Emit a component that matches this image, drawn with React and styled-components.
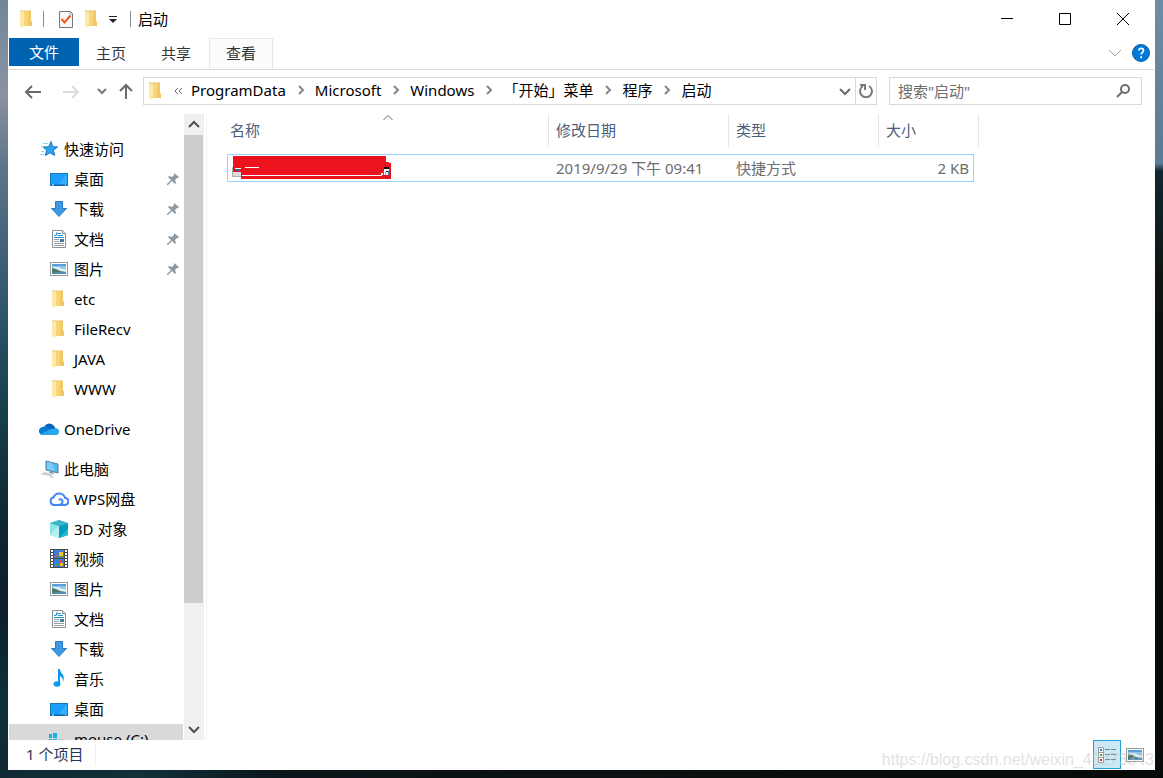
import { useState } from 'react';
import styled, { createGlobalStyle } from 'styled-components';

const GlobalStyle = createGlobalStyle`
  * {
    box-sizing: border-box;
  }
  body {
    margin: 0;
    font-family: "Noto Sans", "Noto Sans CJK SC", sans-serif;
    font-size: 15px;
    line-height: 20px;
    color: #000;
  }
  button, input {
    font: inherit;
    color: inherit;
  }
  svg {
    display: block;
    flex: none;
  }
`
const Desktop = styled.div`
  position: relative;
  height: 100vh;
  padding: 0 8px 8px;
  background:
    linear-gradient(90deg, #0f2a35, #12303a 12%, #0a1418 25%, #0b0f10 60%, #070b08) bottom / 100% 8px no-repeat,
    linear-gradient(#6f8799, #8a92a3 12%, #5b7388 22%, #33586f 38%, #17404d 52%, #0e2834 66%, #0c2029 78%, #0c3238 90%, #12262f) left / 8px 100% no-repeat,
    linear-gradient(#6d8ea8, #5b7d98 18%, #5b7d98 21%, #13252e 22%, #101e25 28%, #0d1510 36%, #060b0a 60%, #080b09) right / 8px 100% no-repeat;
`
const Window = styled.main`
  height: 100%;
  display: flex;
  flex-direction: column;
  padding: 0 1px;
  background: #fff;
`
const TitleBar = styled.header`
  display: flex;
  align-items: center;
  height: 38px;
  padding: 0 2px 0 8px;
`
const IconButton = styled.button`
  display: flex;
  align-items: center;
  justify-content: center;
  flex: none;
  width: ${(p) => p.$width || 20}px;
  height: ${(p) => p.$height || 28}px;
  padding: 0;
  border: 0;
  background: transparent;
`
const QuickTools = styled.div`
  display: flex;
  align-items: center;
  gap: 6px;
  padding: 0 6px 0 12px;
`
const Divider = styled.span`
  width: 1px;
  height: 16px;
  margin-left: 6px;
  background: #8c8c8c;
`
const Title = styled.h1`
  flex: 1;
  margin: 0 0 0 7px;
  font-size: 15px;
  font-weight: 400;
`
const Ribbon = styled.nav`
  display: flex;
  height: 32px;
  border-bottom: 1px solid #dadbdc;
`
const FileTab = styled.button`
  width: 70px;
  height: 28px;
  padding: 0;
  border: 0;
  background: #0063b1;
  color: #fff;
`
const Tab = styled.button`
  width: 64px;
  margin-right: 1px;
  padding: 0 0 2px;
  border: 1px solid ${(p) => (p.$active ? '#e8e9ec' : 'transparent')};
  border-bottom: 0;
  background: ${(p) => (p.$active ? '#fbfcfe' : 'transparent')};
  color: #333;
`
const RibbonEnd = styled.div`
  display: flex;
  align-items: center;
  gap: 6px;
  margin-left: auto;
  padding: 0 3px 2px 0;
`
const NavBar = styled.div`
  display: flex;
  align-items: center;
  height: 44px;
  padding: 0 12px 2px 6px;
`
const AddressBar = styled.div`
  flex: 1;
  min-width: 0;
  display: flex;
  align-items: center;
  height: 28px;
  margin: 0 12px 0 4px;
  padding-left: 2px;
  border: 1px solid #d9d9d9;
`
const Crumbs = styled.ol`
  flex: 1;
  min-width: 0;
  overflow: hidden;
  display: flex;
  margin: 0;
  padding: 0 0 2px;
  list-style: none;
  white-space: nowrap;
`
const Crumb = styled.li`
  display: flex;
  align-items: center;
  a {
    color: #000;
    text-decoration: none;
  }
  svg {
    margin: 0 9px 0 10px;
  }
`
const Refresh = styled(IconButton)`
  height: 26px;
  border-left: 1px solid #d9d9d9;
`
const Search = styled.form`
  flex: 0 1 253px;
  min-width: 0;
  display: flex;
  align-items: center;
  height: 28px;
  padding: 0 6px 0 8px;
  border: 1px solid #d9d9d9;
  input {
    flex: 1;
    min-width: 0;
    padding: 0;
    border: 0;
    outline: 0;
    background: transparent;
  }
  input::placeholder {
    color: #6d6d6d;
    opacity: 1;
  }
`
const Body = styled.div`
  flex: 1;
  min-height: 0;
  display: flex;
`
const Sidebar = styled.aside`
  flex: 0 0 198px;
  display: flex;
  border-right: 1px solid #f3f3f3;
`
const Tree = styled.div`
  flex: 1;
  overflow: hidden;
  padding-top: 20px;
`
const Group = styled.ul`
  margin: 0 0 10px;
  padding: 0;
  list-style: none;
`
const TreeItem = styled.a`
  display: flex;
  align-items: center;
  gap: 5px;
  height: 30px;
  padding: 0 3px 0 ${(p) => (p.$root ? 30 : 40)}px;
  background: ${(p) => (p.$selected ? '#d9d9d9' : 'transparent')};
  color: #000;
  text-decoration: none;
  white-space: nowrap;
  span {
    flex: 1;
  }
`
const ScrollBar = styled.div`
  width: 20px;
  margin: 0 2px 0 1px;
  display: flex;
  flex-direction: column;
  background: #f0f0f0;
`
const ScrollTrack = styled.div`
  flex: 1;
  padding-right: 1px;
`
const ScrollThumb = styled.div`
  height: 80%;
  background: #cdcdcd;
`
const Files = styled.section`
  flex: 1;
  min-width: 0;
  padding-left: 20px;
`
const Table = styled.table`
  display: block;
  max-width: 752px;
  border-collapse: collapse;
  thead, tbody {
    display: block;
  }
`
const HeadRow = styled.tr`
  display: grid;
  grid-template-columns: minmax(0, 322px) 180px 150px 100px;
  height: 33px;
`
const HeadCell = styled.th`
  position: relative;
  padding: 6px 0 0 ${(p) => (p.$first ? 3 : 7)}px;
  border-right: 1px solid #e5e5e5;
  color: #4c607a;
  font-weight: 400;
  text-align: left;
`
const SortMark = styled.svg`
  position: absolute;
  top: 0;
  left: 50%;
  transform: translateX(-50%);
`
const FileRow = styled.tr`
  display: grid;
  grid-template-columns: minmax(0, 321px) 180px 150px 1fr;
  height: 28px;
  margin: 7px 5px 0 0;
  border: 1px solid #99d1ff;
`
const Cell = styled.td`
  padding: ${(p) => (p.$name ? '0 0 0 4px' : '3px 4px 0 7px')};
  color: #6d6d6d;
  text-align: ${(p) => p.$align || 'left'};
  white-space: nowrap;
`
const StatusBar = styled.footer`
  display: flex;
  align-items: center;
  height: 30px;
  padding: 0 6px 0 17px;
  color: #1e395b;
`
const Count = styled.span`
  flex: none;
  padding: 0 12px 2px 0;
  border-right: 1px solid #f0f0f0;
`
const Views = styled.div`
  display: flex;
  height: 30px;
  margin-left: auto;
`
const ViewButton = styled(IconButton)`
  height: 29px;
  border: 1px solid ${(p) => (p.$on ? '#26a0da' : 'transparent')};
  background: ${(p) => (p.$on ? '#cbe8f6' : 'transparent')};
`
const Watermark = styled.div`
  position: absolute;
  right: 9px;
  bottom: 8px;
  color: rgba(195, 195, 195, .5);
  font-family: "Liberation Sans", Arial, sans-serif;
  font-size: 16px;
  pointer-events: none;
`

function Icon({ size = 20, children }) {
  return <svg width={size} height={size} viewBox={`0 0 ${size} ${size}`} aria-hidden="true">{children}</svg>
}

function Chevron({ d, size = 10, color = '#666', width = 2 }) {
  return <Icon size={size}><path d={d} fill="none" stroke={color} strokeWidth={width} /></Icon>
}

function FolderIcon() {
  return <Icon>
    <path d="M6 2h8v10h1v5H6z" fill="#f6d57c" />
    <path d="M11 2h3v10h1v5h-4z" fill="#f0c965" />
    <path d="M3 2h4v13l-1 4-3-2z" fill="#ffe9a6" />
    <path d="M3 2h11" stroke="#e9c468" />
  </Icon>
}

function DesktopIcon() {
  return <Icon>
    <rect x="1.5" y="4.5" width="17" height="12" fill="#1a9fff" stroke="#1577b8" />
    <path d="M9 16L18 5v11z" fill="#36adff" />
    <path d="M2 16h16" stroke="#0a5c94" />
    <path d="M3 16h2M16 16h1" stroke="#fff" />
  </Icon>
}

function DownloadIcon() {
  return <Icon>
    <path d="M6.5 2.5h7v7h4L10 17.5 2.5 9.5h4z" fill="#3d97e4" stroke="#2b7cc7" />
  </Icon>
}

function DocumentIcon() {
  return <Icon>
    <path d="M3.5 1.5h10l3 3v14h-13z" fill="#fff" stroke="#8d9194" />
    <path d="M13.5 1.5v3h3" fill="#ddd" stroke="#8d9194" />
    <path d="M5 6.5h2l1-3v3M9 4.5h3M9 6.5h5M5 8.5h10" fill="none" stroke="#2692c8" />
    <path d="M5 10.5h5M5 12.5h5M5 14.5h10M5 16.5h10" stroke="#9aa0a5" />
    <path d="M11 10h4v3h-4z" fill="#48799e" />
  </Icon>
}

function PictureIcon() {
  return <Icon>
    <rect x="1.5" y="3.5" width="17" height="13" fill="#fff" stroke="#9b9b9b" />
    <path d="M3 5h14v10H3z" fill="#8fc4ed" />
    <path d="M3 5h14v2H3z" fill="#5a9ee0" />
    <path d="M5 8h5l3 2h4v3H3V9z" fill="#dceef6" />
    <path d="M3 9l4 1 4 2 6 1v1H3z" fill="#4f7a66" />
    <path d="M3 14l8-1h6v2H3z" fill="#4f8fb4" />
  </Icon>
}

function StarIcon() {
  return <Icon>
    <path d="M12 2.5l1.6 5.2 5 .2-4.2 3.3 1.3 5.3-4.6-2.7-4.7 2.7 1.3-5.3-3.5-3.1 5.6-.4z" fill="#2aa4f4" stroke="#1478c0" />
    <path d="M4 4.5h5M2 7.5h3M2 12.5h3M1 15.5h4" stroke="#8fd0f5" />
  </Icon>
}

function CloudIcon() {
  return <Icon>
    <path d="M5 9a5.500 5.500 0 0 1 10-2c1 1 1.500 2 1.500 3L11 13z" fill="#0862b9" />
    <path d="M0 12.500A4 4 0 0 1 4 8c2-1 4 0 6 1l5 4-9 3H4a4 4 0 0 1-4-3.500z" fill="#087bd5" />
    <path d="M2 15l8-4c1-1 3-1.500 5-1a3 3 0 0 1 5 2.500c0 2-1 3.500-3 3.500H4c-1 0-2-.5-2-1z" fill="#29a6ee" />
  </Icon>
}

function ComputerIcon() {
  return <Icon>
    <path d="M7 2l12 3v9L7 11z" fill="#53b9f3" stroke="#5f7f94" />
    <path d="M8 3l5 1 3 8-8-2z" fill="#79cdfa" />
    <path d="M11 12l3 1 1 2-5-1z" fill="#8c9aa4" />
    <path d="M1 15l5-2 9 3-4 1zM10 18l3-1 2 1-3 1z" fill="#c8cdd1" />
  </Icon>
}

function WpsIcon() {
  return <Icon>
    <path d="M12 16h3.500a3.600 3.600 0 0 0 .5-7.200A6 6 0 0 0 4.600 8.300 4 4 0 0 0 4.500 16H9c3 0 4.500-1.500 4.500-3.500S12 10 10.500 10.500" fill="none" stroke="#4285f4" strokeWidth="2" strokeLinecap="round" />
  </Icon>
}

function CubeIcon() {
  return <Icon>
    <path d="M1 4l9-3 9 3v12l-9 3-9-3z" fill="#8be4e8" />
    <path d="M1 4l9-3 9 3-9 3z" fill="#36b4c6" />
    <path d="M10 7l9-3v12l-9 3z" fill="#069bc3" />
    <path d="M10 19V7L2 14v2z" fill="#b5f2ef" />
    <path d="M10 19l9-9v6z" fill="#24bcd2" />
  </Icon>
}

function VideoIcon() {
  return <Icon>
    <path d="M1 0h18v19H1z" fill="#4a4a4a" />
    <path d="M5 1h10v8H5zM5 10h10v8H5z" fill="#3e7cd6" />
    <path d="M3 1v18M17 1v18" stroke="#fff" strokeWidth="2" strokeDasharray="2 1" />
    <path d="M10 3h4v4h-4zM11 14h3v3h-3z" fill="#f4c71f" />
    <path d="M6 6h3v2H6zM11 11h2v3h-2z" fill="#e04a44" />
    <path d="M9 7h5v1H9zM6 15h3v2H6z" fill="#51a33c" />
  </Icon>
}

function MusicIcon() {
  return <Icon>
    <path d="M9 0h2c0 5 6 5 3 13 0-3-1-5-3-6v8H9z" fill="#0a99ed" />
    <ellipse cx="8" cy="15" rx="3.500" ry="2.800" fill="#0a99ed" />
  </Icon>
}

function DriveIcon() {
  return <Icon>
    <path d="M2 15l6-5h7l4 5v3H2z" fill="#c4c7c9" />
    <path d="M0 5h3v4H0zM4 4h4v5H4zM0 10h3v4H0zM4 10h4v5H4z" fill="#10b3ea" />
  </Icon>
}

function PinIcon() {
  return <Icon size={14}>
    <path d="M8 1l5 4-1 1h-1L9 8l1 3-1 1-3-3-4 4H1v-1l4-4-3-3 1-1 3 1 2-2V2z" fill="#8e9aa3" />
  </Icon>
}

function CheckDocIcon() {
  return <Icon>
    <path d="M3.5 2.5h11l2 2v14h-13z" fill="#f5f7fa" stroke="#777" />
    <path d="M14 3v2h2" fill="none" stroke="#aaa" />
    <path d="M5.500 10l3 3.500 6-7" fill="none" stroke="#ef5a10" strokeWidth="2" />
  </Icon>
}

function DetailsIcon() {
  return <Icon>
    <path d="M1.5 2.5h5v15h-5zM2 7.5h4M2 12.5h4" fill="#fff" stroke="#9b9b9b" />
    <path d="M3 4h2v2H3z" fill="#3185c5" />
    <path d="M3 9h2v2H3z" fill="#6d8b35" />
    <path d="M3 14h2v2H3z" fill="#d23a24" />
    <path d="M8 4.5h5M14 4.5h5M8 9.5h5M14 9.5h5M8 14.5h5M14 14.5h5" stroke="#76838a" />
  </Icon>
}

function Redaction() {
  return <svg width="160" height="26" viewBox="0 0 160 26" aria-hidden="true">
    <path d="M.5 12.500h9v9h-9z" fill="#fff" stroke="#aaa" />
    <path d="M1 1h153v6h3v1h2v16H9v-3H1z" fill="#ec131c" />
    <path d="M10 20.500h140M13 12.500h14M3 13.500h6" stroke="#fff" />
    <path d="M4 14h4v2H4z" fill="#3566a8" />
    <path d="M1 17h8v4H1z" fill="#d9dde2" />
    <path d="M149 18h3v-4h5v6h-8z" fill="#fff" />
    <path d="M152 12h5v2h-5zM154 16h2v1h-2z" fill="#111" />
    <path d="M151 16h1v4h-1zM156 16h1v4h-1z" fill="#2f83c6" />
    <path d="M153 17h1v3h-1z" fill="#e79b3c" />
  </svg>
}

const path = ['ProgramData', 'Microsoft', 'Windows', '「开始」菜单', '程序', '启动'];

const groups = [
  { name: '快速访问', icon: StarIcon, items: [
    { name: '桌面', icon: DesktopIcon, pinned: true },
    { name: '下载', icon: DownloadIcon, pinned: true },
    { name: '文档', icon: DocumentIcon, pinned: true },
    { name: '图片', icon: PictureIcon, pinned: true },
    { name: 'etc', icon: FolderIcon },
    { name: 'FileRecv', icon: FolderIcon },
    { name: 'JAVA', icon: FolderIcon },
    { name: 'WWW', icon: FolderIcon },
  ]},
  { name: 'OneDrive', icon: CloudIcon, items: [] },
  { name: '此电脑', icon: ComputerIcon, items: [
    { name: 'WPS网盘', icon: WpsIcon },
    { name: '3D 对象', icon: CubeIcon },
    { name: '视频', icon: VideoIcon },
    { name: '图片', icon: PictureIcon },
    { name: '文档', icon: DocumentIcon },
    { name: '下载', icon: DownloadIcon },
    { name: '音乐', icon: MusicIcon },
    { name: '桌面', icon: DesktopIcon },
    { name: 'mouse (C:)', icon: DriveIcon, selected: true },
  ]},
];

function TreeRow({ item, root }) {
  const ItemIcon = item.icon;
  return <li>
    <TreeItem href="#" $root={root} $selected={item.selected}>
      <ItemIcon />
      <span>{item.name}</span>
      {item.pinned ? <PinIcon /> : null}
    </TreeItem>
  </li>
}

function Navigation() {
  return <Sidebar>
    <Tree>
      {groups.map((g) => <Group key={g.name}>
        <TreeRow item={g} root />
        {g.items.map((item) => <TreeRow key={item.name} item={item} />)}
      </Group>)}
    </Tree>
    <ScrollBar>
      <IconButton $height={21}><Chevron d="M1 8l5-5 5 5" size={12} color="#505050" /></IconButton>
      <ScrollTrack><ScrollThumb /></ScrollTrack>
      <IconButton $height={20}><Chevron d="M1 3l5 5 5-5" size={12} color="#505050" /></IconButton>
    </ScrollBar>
  </Sidebar>
}

function FileList() {
  return <Files>
    <Table>
      <thead>
        <HeadRow>
          <HeadCell $first>
            名称
            <SortMark width="10" height="8" viewBox="0 0 10 8"><path d="M.5 6L5 1.500 9.500 6" fill="none" stroke="#6d6d6d" /></SortMark>
          </HeadCell>
          <HeadCell>修改日期</HeadCell>
          <HeadCell>类型</HeadCell>
          <HeadCell>大小</HeadCell>
        </HeadRow>
      </thead>
      <tbody>
        <FileRow>
          <Cell $name><Redaction /></Cell>
          <Cell>2019/9/29 下午 09:41</Cell>
          <Cell>快捷方式</Cell>
          <Cell $align="right">2 KB</Cell>
        </FileRow>
      </tbody>
    </Table>
  </Files>
}

export default function App() {
  const [tab, setTab] = useState('查看');
  const [keyword, setKeyword] = useState('');

  return <>
    <GlobalStyle />
    <Desktop>
      <Window>
        <TitleBar>
          <FolderIcon />
          <Divider />
          <QuickTools>
            <IconButton><CheckDocIcon /></IconButton>
            <IconButton><FolderIcon /></IconButton>
            <IconButton $width={10}>
              <Icon size={10}><path d="M1 2h8v1H1zM1 5h8L5 9z" fill="#222" /></Icon>
            </IconButton>
          </QuickTools>
          <Divider />
          <Title>启动</Title>
          <IconButton $width={58}><Icon size={12}><path d="M0 5.5h12" stroke="#000" /></Icon></IconButton>
          <IconButton $width={58}><Icon size={12}><path d="M.5.5h11v11H.5z" fill="none" stroke="#000" /></Icon></IconButton>
          <IconButton $width={58}><Icon size={12}><path d="M0 0l12 12M12 0L0 12" stroke="#000" /></Icon></IconButton>
        </TitleBar>
        <Ribbon>
          <FileTab>文件</FileTab>
          {['主页', '共享', '查看'].map((t) => <Tab key={t} $active={t === tab} onClick={() => setTab(t)}>{t}</Tab>)}
          <RibbonEnd>
            <IconButton><Chevron d="M1 4l6 6 6-6" size={14} color="#a0a0a0" width={1} /></IconButton>
            <IconButton>
              <Icon size={18}>
                <circle cx="9" cy="9" r="8.500" fill="#0078d7" stroke="#0a5fa8" />
                <path d="M6.800 6.500c0-3 4.700-2.800 4.700 0 0 1.800-2.300 1.800-2.300 4M9.200 12.300v2" fill="none" stroke="#fff" strokeWidth="1.700" />
              </Icon>
            </IconButton>
          </RibbonEnd>
        </Ribbon>
        <NavBar>
          <IconButton $width={36}><Chevron d="M16 9H1M7 3L1 9l6 6" size={16} color="#6b6b6b" /></IconButton>
          <IconButton $width={40}><Chevron d="M0 9h15M9 3l6 6-6 6" size={16} color="#dcdcdc" /></IconButton>
          <IconButton $width={22}><Chevron d="M1 3l4 4 4-4" color="#7a7a7a" /></IconButton>
          <IconButton $width={26}><Chevron d="M8 16V2M2 8l6-6 6 6" size={16} color="#6b6b6b" /></IconButton>
          <AddressBar>
            <FolderIcon />
            <IconButton $width={25} $height={26}><Chevron d="M4 2L1 5l3 3M8 2L5 5l3 3" color="#666" width={1} /></IconButton>
            <Crumbs>
              {path.map((name, i) => <Crumb key={name}>
                <a href="#">{name}</a>
                {i < path.length - 1 ? <Chevron d="M3 1l4 4-4 4" color="#868686" /> : null}
              </Crumb>)}
            </Crumbs>
            <IconButton $height={26}><Chevron d="M1 4l5 5 5-5" size={12} color="#6b6b6b" /></IconButton>
            <Refresh $width={21}>
              <Icon size={16}>
                <path d="M11 3a6 6 0 1 1-6 0" fill="none" stroke="#7a7a7a" strokeWidth="2" />
                <path d="M2 2h5v5" fill="none" stroke="#7a7a7a" strokeWidth="2" />
              </Icon>
            </Refresh>
          </AddressBar>
          <Search onSubmit={(e) => e.preventDefault()}>
            <input aria-label={'搜索"启动"'} placeholder={'搜索"启动"'} value={keyword} onChange={(e) => setKeyword(e.target.value)} />
            <IconButton $width={24} $height={26}>
              <Icon size={14}>
                <circle cx="9" cy="5" r="4" fill="none" stroke="#6d6d6d" strokeWidth="2" />
                <path d="M6 8l-5 5" stroke="#6d6d6d" strokeWidth="2" />
              </Icon>
            </IconButton>
          </Search>
        </NavBar>
        <Body>
          <Navigation />
          <FileList />
        </Body>
        <StatusBar>
          <Count>1 个项目</Count>
          <Views>
            <ViewButton $width={28} $on><DetailsIcon /></ViewButton>
            <ViewButton $width={27}><PictureIcon /></ViewButton>
          </Views>
        </StatusBar>
      </Window>
      <Watermark>https://blog.csdn.net/weixin_45273343</Watermark>
    </Desktop>
  </>
}
